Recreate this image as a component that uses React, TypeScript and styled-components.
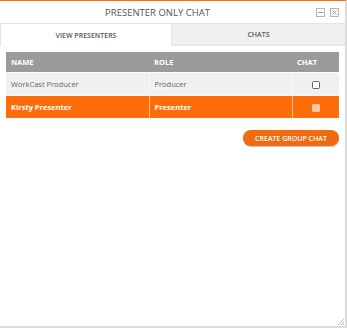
import React, { useState } from 'react';
import styled, { createGlobalStyle } from 'styled-components';

const GlobalStyle = createGlobalStyle`
  html, body {
    margin: 0;
    padding: 0;
    background: #fff;
  }
  body {
    font-family: "Open Sans", "Liberation Sans", sans-serif;
  }
`;

const Panel = styled.div`
  position: relative;
  box-sizing: border-box;
  width: 347px;
  height: 328px;
  border-top: 1px solid #ff6d0a;
  border-right: 2px solid #dcdcdc;
  border-bottom: 2px solid #dcdcdc;
  background: #fff;
  display: flex;
  flex-direction: column;
`;

const TitleBar = styled.div`
  height: 22px;
  padding-right: 30px;
  display: flex;
  align-items: center;
  justify-content: center;
  position: relative;
`;

const Title = styled.h1`
  margin: 0;
  font-size: 9.5px;
  font-weight: 400;
  color: #555;
`;

const WindowIcons = styled.div`
  position: absolute;
  right: 6px;
  top: 7px;
  display: flex;
  gap: 5px;
`;

const IconBox = styled.span`
  box-sizing: border-box;
  width: 9px;
  height: 9px;
  border: 1px solid #b5b5b5;
  display: flex;
  align-items: center;
  justify-content: center;
  svg {
    display: block;
  }
`;

const Tabs = styled.div`
  display: flex;
  height: 23px;
`;

const Tab = styled.button<{ $active?: boolean }>`
  flex: ${({ $active }) => ($active ? '0 0 172px' : '1')};
  box-sizing: border-box;
  border: none;
  border-top: 1px solid #e4e4e4;
  border-left: ${({ $active }) => ($active ? '1px solid #e4e4e4' : 'none')};
  border-right: ${({ $active }) => ($active ? '1px solid #e4e4e4' : 'none')};
  border-bottom: ${({ $active }) => ($active ? 'none' : '2px solid #e8e8e8')};
  background: ${({ $active }) => ($active ? '#fff' : '#f0f0f0')};
  font-family: inherit;
  font-size: 7px;
  font-weight: 600;
  color: #555;
  padding: 0;
  cursor: pointer;
`;

const Content = styled.div`
  padding: 6px 6px 0 6px;
  display: flex;
  flex-direction: column;
`;

const Table = styled.table`
  width: 100%;
  table-layout: fixed;
  border-collapse: collapse;
  font-size: 7.5px;
`;

const HeadCell = styled.th`
  background: #9b9b9b;
  color: #fff;
  font-weight: 700;
  text-align: left;
  height: 20px;
  padding: 0 5px;
`;

const Row = styled.tr<{ $selected?: boolean }>`
  background: ${({ $selected }) => ($selected ? '#ff6d0a' : '#f0f0f0')};
  color: ${({ $selected }) => ($selected ? '#fff' : '#666')};
  font-weight: ${({ $selected }) => ($selected ? 700 : 400)};
`;

const Cell = styled.td<{ $center?: boolean; $last?: boolean }>`
  height: 22px;
  padding: 0 5px;
  text-align: ${({ $center }) => ($center ? 'center' : 'left')};
  border-right: ${({ $last }) => ($last ? 'none' : '1px solid rgba(255,255,255,0.6)')};
  border-top: 1px solid #fff;
`;

const Check = styled.span<{ $selected?: boolean }>`
  display: inline-block;
  box-sizing: border-box;
  width: 8px;
  height: 8px;
  vertical-align: middle;
  border-radius: 1.5px;
  border: ${({ $selected }) => ($selected ? 'none' : '1px solid #666')};
  background: ${({ $selected }) => ($selected ? '#fcc6a2' : '#fff')};
`;

const Actions = styled.div`
  display: flex;
  justify-content: flex-end;
  margin-top: 12px;
`;

const GroupButton = styled.button`
  background: #f26a10;
  color: #fff;
  border: none;
  border-radius: 8px;
  height: 16px;
  width: 96px;
  padding: 0;
  font-family: inherit;
  font-size: 7px;
  font-weight: 600;
  box-shadow: 0 1px 1px rgba(0, 0, 0, 0.25);
  cursor: pointer;
`;

const Grip = styled.svg`
  position: absolute;
  right: 0;
  bottom: 0;
`;

const presenters = [
  { name: 'WorkCast Producer', role: 'Producer' },
  { name: 'Kirsty Presenter', role: 'Presenter' },
];

export default function App() {
  const [tab, setTab] = useState(0);
  const selected = 1;

  return (
    <>
      <GlobalStyle />
      <Panel>
        <TitleBar>
          <Title>PRESENTER ONLY CHAT</Title>
          <WindowIcons>
            <IconBox>
              <svg width="5" height="5" viewBox="0 0 5 5">
                <rect x="0" y="2" width="5" height="1" fill="#999" />
              </svg>
            </IconBox>
            <IconBox>
              <svg width="5" height="5" viewBox="0 0 5 5">
                <path d="M0.5 0.5 L4.5 4.5 M4.5 0.5 L0.5 4.5" stroke="#999" strokeWidth="1" />
              </svg>
            </IconBox>
          </WindowIcons>
        </TitleBar>
        <Tabs>
          <Tab $active={tab === 0} onClick={() => setTab(0)}>VIEW PRESENTERS</Tab>
          <Tab $active={tab === 1} onClick={() => setTab(1)}>CHATS</Tab>
        </Tabs>
        <Content>
          <Table>
            <colgroup>
              <col style={{ width: 143 }} />
              <col style={{ width: 143 }} />
              <col />
            </colgroup>
            <thead>
              <tr>
                <HeadCell>NAME</HeadCell>
                <HeadCell>ROLE</HeadCell>
                <HeadCell>CHAT</HeadCell>
              </tr>
            </thead>
            <tbody>
              {presenters.map((p, i) => (
                <Row key={p.name} $selected={i === selected}>
                  <Cell>{p.name}</Cell>
                  <Cell>{p.role}</Cell>
                  <Cell $center $last>
                    <Check $selected={i === selected} />
                  </Cell>
                </Row>
              ))}
            </tbody>
          </Table>
          <Actions>
            <GroupButton>CREATE GROUP CHAT</GroupButton>
          </Actions>
        </Content>
        <Grip width="8" height="8" viewBox="0 0 8 8">
          <path d="M7 1 L1 7 M7 4 L4 7 M7 6 L6 7" stroke="#bbb" strokeWidth="1" />
        </Grip>
      </Panel>
    </>
  );
}
